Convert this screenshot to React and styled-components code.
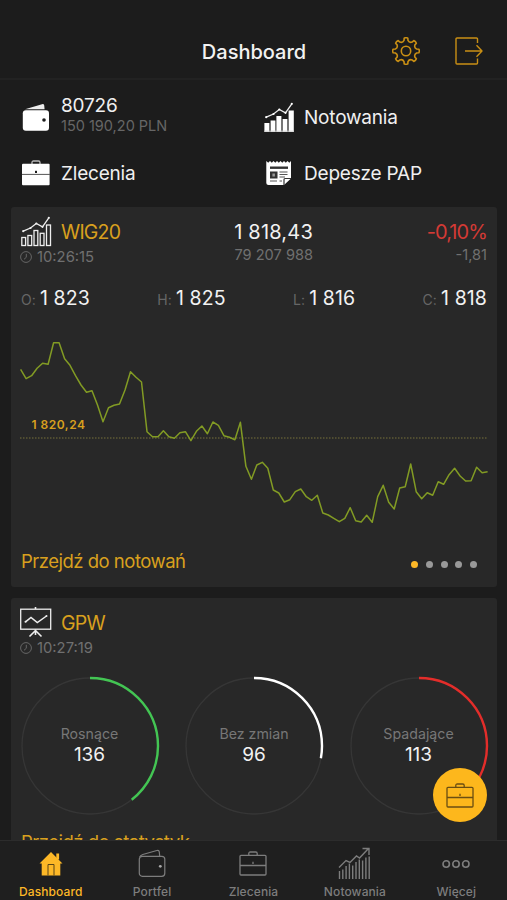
import React from 'react';
import styled, { createGlobalStyle } from 'styled-components';

const GlobalStyle = createGlobalStyle`
    * {
        box-sizing: border-box;
    }

    body {
        margin: 0;
        background: #1c1c1c;
        font-family: Inter, Roboto, sans-serif;
        -webkit-font-smoothing: antialiased;
    }
`;

const Screen = styled.div`
    position: relative;
    display: flex;
    flex-direction: column;
    width: 507px;
    height: 900px;
    overflow: hidden;
    background: #1c1c1c;
    color: #f2f2f2;
`;

const Header = styled.header`
    display: grid;
    grid-template-columns: 1fr auto 1fr;
    align-items: center;
    flex: none;
    height: 80px;
    padding: 24px 23px 0 24px;
    border-bottom: 2px solid #222;
`;

const Title = styled.h1`
    grid-column: 2;
    margin: 0;
    padding-top: 2px;
    font-size: 20px;
    font-weight: 500;
`;

const HeaderActions = styled.div`
    display: flex;
    justify-content: flex-end;
    align-items: center;
    gap: 35px;
    color: #c98f14;
`;

const Content = styled.main`
    flex: 1;
    min-height: 0;
    padding: 9px 10px 0 11px;
    overflow: hidden;
`;

const QuickLinks = styled.nav`
    display: grid;
    grid-template-columns: 242px 1fr;
    grid-auto-rows: 56px;
    height: 118px;
    padding-left: 11px;
`;

const QuickLink = styled.a`
    display: grid;
    grid-template-columns: ${({ $slot }) => $slot}px 1fr;
    align-items: center;
    color: #f0f0f0;
`;

const QuickTitle = styled.div`
    font-size: 19px;
    line-height: 21px;
    letter-spacing: -0.2px;
`;

const QuickSub = styled.div`
    margin-bottom: 3px;
    font-size: 14.5px;
    line-height: 20px;
    color: #666;
`;

const Card = styled.section`
    height: ${({ $height }) => $height}px;
    margin-bottom: 11px;
    padding: 11px 10px 0;
    border-radius: 3px;
    background: #282828;
`;

const CardHead = styled.div`
    display: grid;
    grid-template-columns: 40px 120px 132px 1fr;
    grid-template-rows: 26px 24px;
    align-items: center;
`;

const CardTitle = styled.h2`
    margin: 0;
    padding-top: 1px;
    font-size: 19.5px;
    font-weight: 400;
    letter-spacing: -0.8px;
    color: #d9a01e;
`;

const HeadValue = styled.div`
    padding-top: 1px;
    font-size: 20px;
    text-align: right;
    letter-spacing: ${({ $spacing }) => $spacing}px;
    color: ${({ $color }) => $color || '#f2f2f2'};
`;

const HeadSub = styled.div`
    margin-top: -2px;
    font-size: 14.6px;
    text-align: right;
    color: #707070;
`;

const Time = styled.div`
    display: flex;
    align-items: center;
    gap: 5px;
    grid-column: 1 / span 2;
    margin-left: -1px;
    padding-top: 1px;
    font-size: 14.8px;
    color: #707070;
`;

const Prices = styled.div`
    display: flex;
    justify-content: space-between;
    align-items: center;
    height: 60px;
`;

const Price = styled.div`
    font-size: 19.5px;
    letter-spacing: 0.1px;
    white-space: nowrap;
`;

const PriceLabel = styled.span`
    margin-right: 4px;
    font-size: 14px;
    color: #666;
`;

const ChartSvg = styled.svg`
    display: block;
    margin-left: -1px;
`;

const CardFooter = styled.div`
    display: flex;
    justify-content: space-between;
    align-items: center;
    height: 46px;
`;

const CardLink = styled.a`
    display: block;
    font-size: 18.5px;
    line-height: 24px;
    letter-spacing: -0.5px;
    color: #d9a01e;
`;

const Dots = styled.div`
    display: flex;
    gap: 7.7px;
    margin: 7px 10px 0 0;
`;

const Dot = styled.i`
    width: 7px;
    height: 7px;
    border-radius: 50%;
    background: ${({ $active }) => $active ? '#fdb827' : '#999'};
`;

const Rings = styled.div`
    display: flex;
    justify-content: space-between;
    margin: 17.5px -0.5px 0 -0.5px;
`;

const RingBox = styled.div`
    display: grid;
    place-items: center;
    width: 138px;
    height: 138px;

    > * {
        grid-area: 1 / 1;
    }
`;

const RingText = styled.div`
    padding-bottom: 3px;
    text-align: center;
`;

const RingLabel = styled.div`
    font-size: 14.2px;
    line-height: 20px;
    color: #777;
`;

const RingValue = styled.div`
    font-size: 19px;
    line-height: 21px;
`;

const Statistics = styled.div`
    padding-top: 15px;
`;

const FloatingButton = styled.button`
    position: absolute;
    right: 20px;
    bottom: 78px;
    display: flex;
    justify-content: center;
    align-items: center;
    width: 54px;
    height: 54px;
    padding: 0;
    border: 0;
    border-radius: 50%;
    background: #fdb71c;
    color: #6b4e12;
`;

const TabBar = styled.nav`
    display: grid;
    grid-template-columns: repeat(5, 1fr);
    flex: none;
    height: 60px;
    border-top: 1px solid #2c2c2c;
    background: #1f1f1f;
`;

const Tab = styled.a`
    display: flex;
    flex-direction: column;
    align-items: center;
    font-size: 12px;
    font-weight: 500;
    letter-spacing: 0.1px;
    line-height: 18px;
    color: ${({ $active }) => $active ? '#fdb827' : '#7d7d7d'};
`;

const TabIcon = styled.span`
    display: flex;
    justify-content: center;
    align-items: center;
    height: 42px;
    padding-top: 3px;
`;

const polar = (angle, r) => {
    const a = angle * Math.PI / 180;
    return `${(14 + r * Math.sin(a)).toFixed(2)} ${(14 - r * Math.cos(a)).toFixed(2)}`;
};

const GearIcon = () => {
    let d = `M${polar(-8, 13)}`;
    for (let i = 0; i < 8; i++) {
        const turn = i * 45;
        d += `Q${polar(turn, 13.8)} ${polar(turn + 8, 13)}L${polar(turn + 10.5, 10.8)}`;
        d += `Q${polar(turn + 22.5, 8.6)} ${polar(turn + 34.5, 10.8)}L${polar(turn + 37, 13)}`;
    }
    return (
        <svg width="28" height="28" fill="none" stroke="currentColor" strokeWidth="1.6" strokeLinejoin="round">
            <path d={`${d}Z`} />
            <circle cx="14" cy="14" r="4.7" />
        </svg>
    );
};

const ExitIcon = () => (
    <svg width="29" height="28" fill="none" stroke="currentColor" strokeWidth="1.4" strokeLinejoin="round">
        <path d="M22.5 6V2Q22.5 1 21.5 1H2Q1 1 1 2V26Q1 27 2 27H21.5Q22.5 27 22.5 26V21.5M10 14H27M21.5 8.2L27 14L21.5 19.8" />
    </svg>
);

const WalletSolid = () => (
    <svg width="28" height="28">
        <path d="M3 6.3L20 1.2Q22 .8 22.2 2.5L22.6 6.3Z" fill="#eee" />
        <rect x=".8" y="7.2" width="26.2" height="20.5" rx="3" fill="#fff" />
        <circle cx="22" cy="17" r="1.8" fill="#1c1c1c" />
    </svg>
);

const CaseSolid = () => (
    <svg width="28" height="26">
        <path d="M10 4V2.5Q10 1 11.5 1H16.5Q18 1 18 2.5V4" fill="none" stroke="#bbb" strokeWidth="1.3" />
        <rect x="0" y="3.8" width="27.6" height="21.5" rx="1" fill="#fff" />
        <path d="M0 14.4H28" stroke="#555" />
        <rect x="13" y="10.8" width="2" height="2.2" fill="#1c1c1c" />
    </svg>
);

const trend = [[2.2, 15.2], [9.5, 12], [15.3, 7.5], [21.5, 10.8], [27.8, 1.8]];

const BarsSolid = () => (
    <svg width="31" height="31" fill="#fff">
        <path d="M.4 21H5.4V30H.4ZM6.6 18.6H11.4V30H6.6ZM12.4 14H17.4V30H12.4ZM18.6 17H23.4V30H18.6ZM24.6 8.5H29.8V30H24.6Z" />
        <path d="M.4 29.2H29.8" stroke="#ccc" />
        <polyline points={trend.join(' ')} fill="none" stroke="#eee" strokeWidth="1.3" />
        {trend.map(([x, y]) => <circle key={x} cx={x} cy={y} r="1.1" />)}
    </svg>
);

const BarsOutline = () => (
    <svg width="31" height="31" fill="none" stroke="#eee" strokeWidth="1.3">
        <rect x=".8" y="21.5" width="3.8" height="8" />
        <rect x="6.9" y="19.5" width="3.8" height="10" />
        <rect x="13" y="14.5" width="3.8" height="15" />
        <rect x="19.2" y="17.3" width="3.8" height="12.2" />
        <rect x="25.5" y="9" width="4" height="20.5" />
        <polyline points={trend.join(' ')} />
        {trend.map(([x, y]) => <circle key={x} cx={x} cy={y} r="1.1" fill="#eee" stroke="none" />)}
    </svg>
);

const NewsIcon = () => (
    <svg width="30" height="26">
        <path d="M2.3 1V23Q2.3 25 4.5 25H20L27 18.5V1L25.3 2.8L23.5 1L21.8 2.8L20 1L18.3 2.8L16.5 1L14.8 2.8L13 1L11.3 2.8L9.5 1L7.8 2.8L6 1L4.2 2.8Z" fill="#fff" />
        <path d="M6 7.7H24" stroke="#333" strokeWidth="2.4" />
        <rect x="6" y="11.5" width="7.5" height="7" fill="#333" />
        <rect x="8.4" y="13.5" width="2.5" height="3" fill="#999" />
        <path d="M15.5 12H23.5M15.5 14.5H23.5M15.5 17H21M6 21H13M15.5 21H18" stroke="#555" strokeWidth="1.2" />
        <path d="M20 25V19.5Q20 18.5 21 18.5H27" fill="none" stroke="#333" strokeWidth="1.2" />
    </svg>
);

const BoardSvg = styled.svg`
    margin-left: -1px;
`;

const BoardIcon = () => (
    <BoardSvg width="32" height="32" fill="none" stroke="#eee" strokeWidth="1.3">
        <path d="M15.5 1V3M15.5 23.5V29M15.5 24.5L9.5 30.5M15.5 24.5L21.5 30.5" strokeWidth="1.6" />
        <rect x=".7" y="3.2" width="30" height="20" />
        <path d="M5.5 15.8L11 11.5L17.3 16.5L26.5 10" strokeWidth="1.5" />
        <circle cx="5.5" cy="15.8" r="1" fill="#eee" stroke="none" />
        <circle cx="26.5" cy="10" r="1" fill="#eee" stroke="none" />
    </BoardSvg>
);

const ClockIcon = () => (
    <svg width="12" height="12" fill="none" stroke="#666" strokeWidth="1">
        <circle cx="6" cy="6" r="5.4" />
        <path d="M6.3 2.8V6.3L4 8.3" />
    </svg>
);

const HomeIcon = () => (
    <svg width="24" height="26" fill="#fdb827">
        <path d="M12 1L23.5 12.5H21.3V24.5H2.7V12.5H.5Z" />
        <rect x="17.3" y="2.5" width="2.8" height="6" />
        <path d="M9 24.5V13.5H15V24.5" fill="none" stroke="#5b4517" strokeWidth="1" />
    </svg>
);

const WalletIcon = () => (
    <svg width="28" height="29" fill="none" stroke="currentColor" strokeWidth="1.2">
        <rect x="1.3" y="7.3" width="25.5" height="20" rx="3" />
        <path d="M1.6 8.3Q2.3 6.3 4.8 5.5L18.8 1.5Q21 1 21.3 3L21.7 7" />
        <circle cx="22.3" cy="17.3" r="1.4" fill="#aaa" stroke="none" />
    </svg>
);

const CaseIcon = () => (
    <svg width="28" height="25" fill="none" stroke="currentColor" strokeWidth="1.3">
        <rect x="1" y="4.3" width="26" height="19.7" rx="1" />
        <path d="M9.8 4.3V2.5Q9.8 1 11.3 1H16.7Q18.2 1 18.2 2.5V4.3M1 14.5H27M14 10.8V13" />
    </svg>
);

const GrowthIcon = () => (
    <svg width="33" height="33" fill="none" stroke="currentColor" strokeWidth="1.4">
        {[24, 22.5, 19, 16.5, 18.5, 15, 12.5, 13.5, 10.5, 9.5].map((y, i) => (
            <path key={i} d={`M${1.5 + i * 3.3} ${y}V32`} />
        ))}
        <path d="M1 20.5L8 13.5L12 15.5L18.5 9L21.5 11L30 2M24.5 1.5H31V8" />
    </svg>
);

const MoreIcon = () => (
    <svg width="28" height="10" fill="none" stroke="currentColor" strokeWidth="1.6">
        <circle cx="4.2" cy="5" r="3.2" />
        <circle cx="14" cy="5" r="3.2" />
        <circle cx="23.8" cy="5" r="3.2" />
    </svg>
);

// session ticks, three units per pixel, measured down from the top of the plot
const ticks = [
    124, 152, 143, 121, 106, 109, 44, 44, 92, 112, 143, 171, 193, 188, 231, 281, 239, 232, 228, 186, 131, 148,
    162, 311, 326, 326, 308, 326, 331, 314, 311, 338, 310, 294, 317, 282, 292, 323, 328, 335, 283, 415, 454,
    411, 403, 421, 486, 495, 522, 515, 491, 483, 506, 517, 502, 555, 561, 571, 581, 571, 539, 578, 582, 562,
    583, 506, 472, 523, 543, 480, 476, 408, 491, 512, 494, 502, 461, 469, 440, 421, 444, 459, 458, 418, 434, 431
].map(tick => tick / 3);

const Chart = () => {
    const step = 467 / (ticks.length - 1);
    const points = ticks.map((y, i) => `${(0.6 + i * step).toFixed(1)},${y.toFixed(1)}`).join(' ');
    return (
        <ChartSvg width="469" height="210">
            <path d="M0 110H468" stroke="#77703a" strokeDasharray="1.5 1.5" />
            <polyline points={points} fill="none" stroke="#829b24" strokeWidth="1.5" strokeLinejoin="round" />
            <text x="11.5" y="101" fill="#d9a01e" fontSize="12" fontWeight="600" letterSpacing="0.5">1 820,24</text>
        </ChartSvg>
    );
};

const prices = [['O:', '1 823'], ['H:', '1 825'], ['L:', '1 816'], ['C:', '1 818']];

const rings = [
    { label: 'Rosnące', value: 136, color: '#43c553' },
    { label: 'Bez zmian', value: 96, color: '#fff' },
    { label: 'Spadające', value: 113, color: '#e32d2a' }
];

const total = rings.reduce((sum, item) => sum + item.value, 0);

const Ring = ({ label, value, color }) => {
    const length = 2 * Math.PI * 68;
    return (
        <RingBox>
            <svg width="138" height="138" fill="none" overflow="visible">
                <circle cx="69" cy="69" r="68" stroke="#363636" strokeWidth="1.3" />
                <circle
                    cx="69"
                    cy="69"
                    r="68"
                    stroke={color}
                    strokeWidth="2.4"
                    strokeDasharray={`${length * value / total} ${length}`}
                    transform="rotate(-90 69 69)"
                />
            </svg>
            <RingText>
                <RingLabel>{label}</RingLabel>
                <RingValue>{value}</RingValue>
            </RingText>
        </RingBox>
    );
};

const tabs = [
    { name: 'Dashboard', icon: <HomeIcon />, active: true },
    { name: 'Portfel', icon: <WalletIcon /> },
    { name: 'Zlecenia', icon: <CaseIcon /> },
    { name: 'Notowania', icon: <GrowthIcon /> },
    { name: 'Więcej', icon: <MoreIcon /> }
];

export default function App() {
    return (
        <Screen>
            <GlobalStyle />
            <Header>
                <Title>Dashboard</Title>
                <HeaderActions>
                    <GearIcon />
                    <ExitIcon />
                </HeaderActions>
            </Header>
            <Content>
                <QuickLinks>
                    <QuickLink $slot={39}>
                        <WalletSolid />
                        <div>
                            <QuickTitle>80726</QuickTitle>
                            <QuickSub>150 190,20 PLN</QuickSub>
                        </div>
                    </QuickLink>
                    <QuickLink $slot={40}>
                        <BarsSolid />
                        <QuickTitle>Notowania</QuickTitle>
                    </QuickLink>
                    <QuickLink $slot={39}>
                        <CaseSolid />
                        <QuickTitle>Zlecenia</QuickTitle>
                    </QuickLink>
                    <QuickLink $slot={40}>
                        <NewsIcon />
                        <QuickTitle>Depesze PAP</QuickTitle>
                    </QuickLink>
                </QuickLinks>
                <Card $height={380}>
                    <CardHead>
                        <BarsOutline />
                        <CardTitle>WIG20</CardTitle>
                        <HeadValue $spacing={0.2}>1 818,43</HeadValue>
                        <HeadValue $spacing={-0.9} $color="#d33a35">-0,10%</HeadValue>
                        <Time><ClockIcon />10:26:15</Time>
                        <HeadSub>79 207 988</HeadSub>
                        <HeadSub>-1,81</HeadSub>
                    </CardHead>
                    <Prices>
                        {prices.map(([label, value]) => (
                            <Price key={label}><PriceLabel>{label}</PriceLabel>{value}</Price>
                        ))}
                    </Prices>
                    <Chart />
                    <CardFooter>
                        <CardLink>Przejdź do notowań</CardLink>
                        <Dots>
                            {[0, 1, 2, 3, 4].map(i => <Dot key={i} $active={i === 0} />)}
                        </Dots>
                    </CardFooter>
                </Card>
                <Card $height={300}>
                    <CardHead>
                        <BoardIcon />
                        <CardTitle>GPW</CardTitle>
                        <span />
                        <span />
                        <Time><ClockIcon />10:27:19</Time>
                    </CardHead>
                    <Rings>
                        {rings.map(item => <Ring key={item.label} {...item} />)}
                    </Rings>
                    <Statistics>
                        <CardLink>Przejdź do statystyk</CardLink>
                    </Statistics>
                </Card>
            </Content>
            <FloatingButton>
                <CaseIcon />
            </FloatingButton>
            <TabBar>
                {tabs.map(({ name, icon, active }) => (
                    <Tab key={name} $active={active}>
                        <TabIcon>{icon}</TabIcon>
                        {name}
                    </Tab>
                ))}
            </TabBar>
        </Screen>
    );
}
